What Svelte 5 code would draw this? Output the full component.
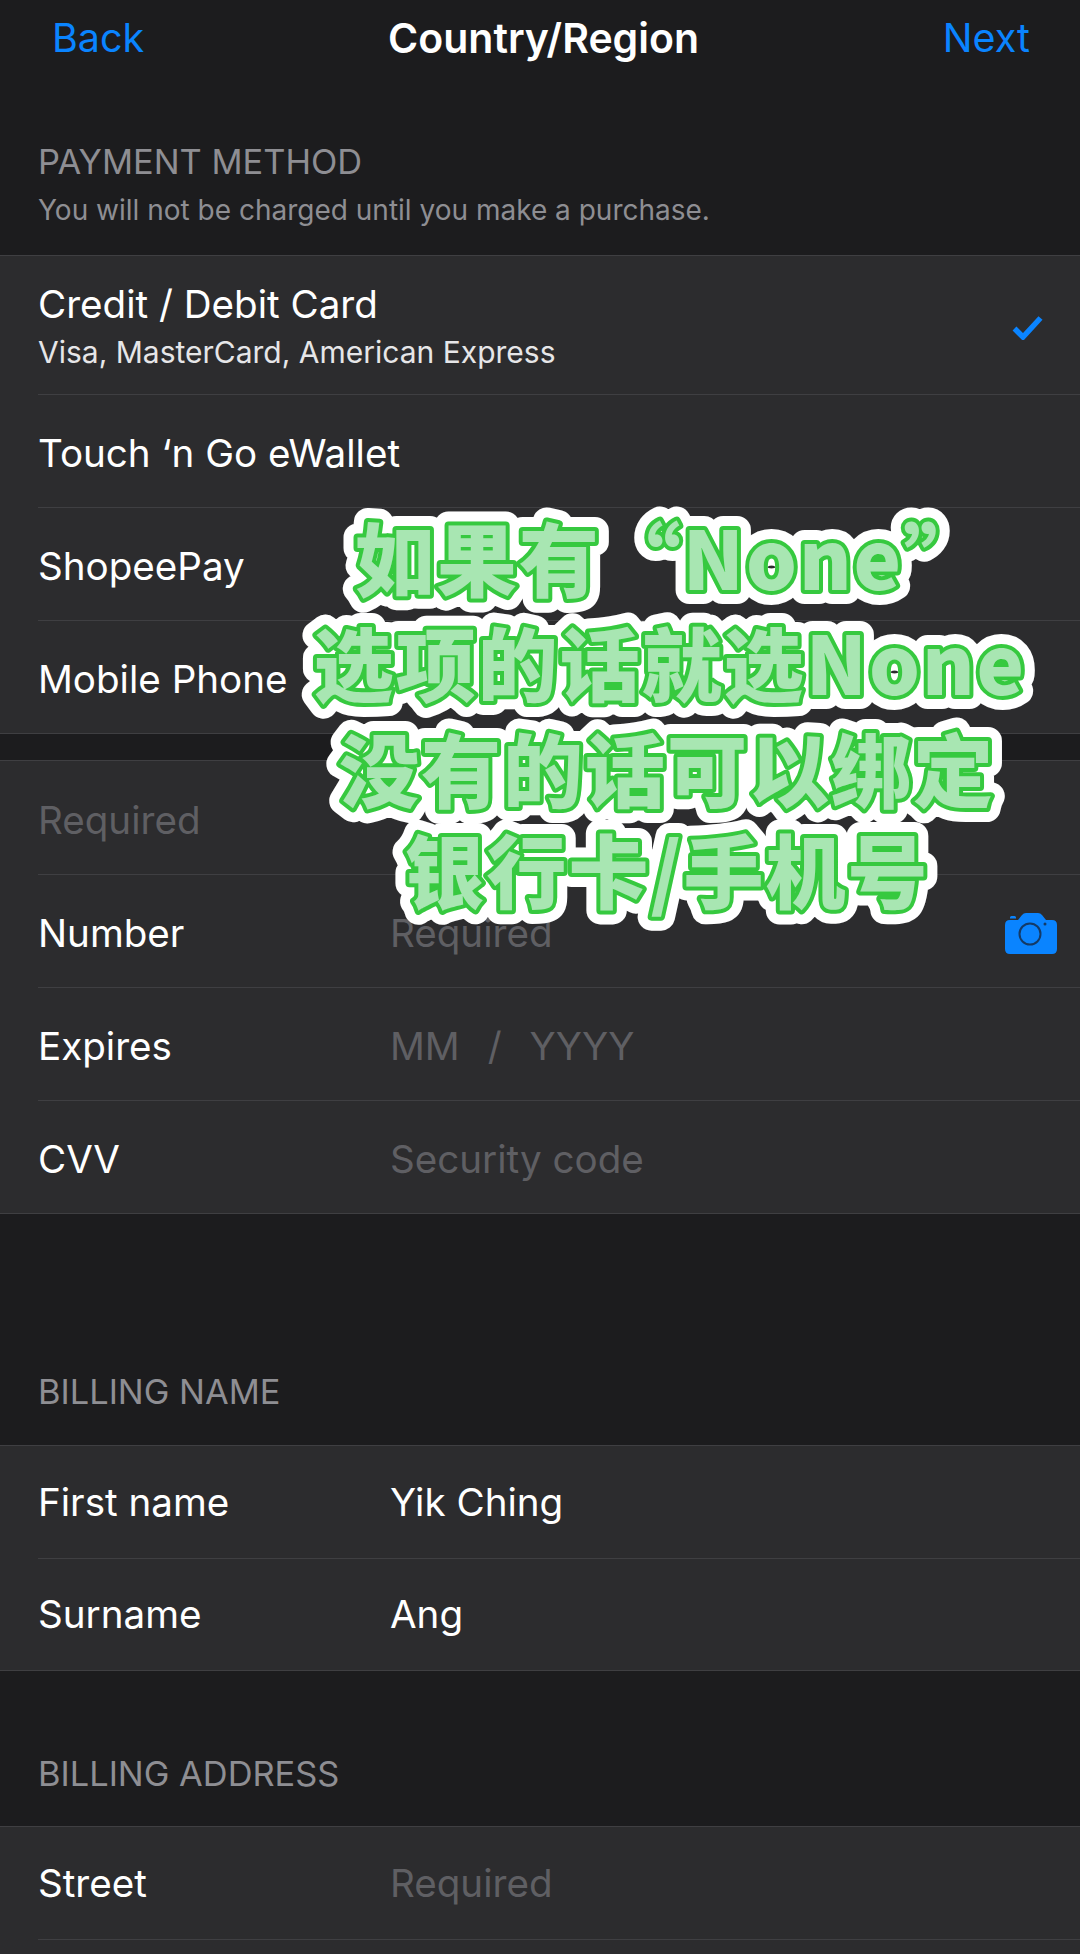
<script>
  const cardRows = [
    { label: 'Number', hint: 'Required', camera: true },
    { label: 'Expires', hint: 'MM', hint2: 'YYYY' },
    { label: 'CVV', hint: 'Security code' }
  ]
  const nameRows = [
    { label: 'First name', value: 'Yik Ching' },
    { label: 'Surname', value: 'Ang' }
  ]
  // x is the centre of each caption line, y its baseline
  const captions = [
    { text: '如果有“None”', x: 670, y: 114 },
    { text: '选项的话就选None', x: 670, y: 219 },
    { text: '没有的话可以绑定', x: 667, y: 325 },
    { text: '银行卡/手机号', x: 667, y: 426 }
  ]
</script>

<div class="page">
  <nav class="nav">
    <span class="link">Back</span>
    <span class="title">Country/Region</span>
    <span class="link">Next</span>
  </nav>

  <div class="head first">
    <div class="head-label">PAYMENT METHOD</div>
    <div class="head-sub">You will not be charged until you make a purchase.</div>
  </div>

  <section class="group">
    <div class="row tall">
      <div class="stack">
        <div class="label">Credit / Debit Card</div>
        <div class="sub">Visa, MasterCard, American Express</div>
      </div>
      <svg class="check" viewBox="0 0 31 25" width="31" height="25">
        <path d="M2.5 13.5 L11 22 L28.5 3" fill="none" stroke="#0a84ff" stroke-width="5.5" />
      </svg>
    </div>
    <div class="row"><span class="label">Touch ‘n Go eWallet</span></div>
    <div class="row"><span class="label">ShopeePay</span></div>
    <div class="row"><span class="label">Mobile Phone</span></div>
  </section>

  <section class="group second">
    <div class="row"><span class="label hint">Required</span></div>
    {#each cardRows as r}
      <div class="row">
        <span class="label key">{r.label}</span>
        <span class="label hint">{r.hint}</span>
        {#if r.hint2}
          <span class="label hint slash">/</span>
          <span class="label hint">{r.hint2}</span>
        {/if}
        {#if r.camera}
          <svg class="camera" viewBox="0 0 52 42" width="52" height="42">
            <path d="M5 8 h8 l4 -5 q1.500 -2 4 -2 h12 q2.500 0 4 2 l4 5 h6 q5 0 5 5 v24 q0 5 -5 5 h-42 q-5 0 -5 -5 v-24 q0 -5 5 -5z M5 5.500 q0 -1.500 1.500 -1.500 h3 q1.500 0 1.500 1.500 v1 h-6z" fill="#0a84ff" />
            <circle cx="25" cy="22" r="10.500" fill="none" stroke="#143a66" stroke-width="2" />
            <circle cx="40" cy="12" r="1.500" fill="#143a66" />
          </svg>
        {/if}
      </div>
    {/each}
  </section>

  <div class="head billing">
    <div class="head-label">BILLING NAME</div>
  </div>
  <section class="group flat">
    {#each nameRows as r}
      <div class="row">
        <span class="label key">{r.label}</span>
        <span class="label">{r.value}</span>
      </div>
    {/each}
  </section>

  <div class="head address">
    <div class="head-label">BILLING ADDRESS</div>
  </div>
  <section class="group flat">
    <div class="row">
      <span class="label key">Street</span>
      <span class="label hint">Required</span>
    </div>
    <div class="row"></div>
  </section>

  <svg class="caption" viewBox="0 0 1080 460" width="1080" height="460">
    {#each captions as line, i}
      <g class="halo"><use href="#caption-{i}" /></g>
      <g class="ink"><text id="caption-{i}" x={line.x} y={line.y} text-anchor="middle">{line.text}</text></g>
    {/each}
  </svg>
</div>

<style>
  :global(body) {
    background: #1c1c1e;
  }
  .page {
    position: relative;
    width: 1080px;
    height: 1954px;
    overflow: hidden;
    background: #1c1c1e;
    color: #fff;
    font-family: Inter, "Noto Sans CJK SC", sans-serif;
  }
  .nav {
    height: 76px;
    padding: 0 50px 0 52px;
    display: flex;
    align-items: center;
    justify-content: space-between;
    font-size: 39.5px;
  }
  .link {
    color: #0a84ff;
  }
  .title {
    font-size: 41px;
    font-weight: 600;
    color: #fff;
  }
  .head {
    box-sizing: border-box;
    padding: 0 38px;
    display: flex;
    flex-direction: column;
  }
  .first {
    height: 179px;
    padding-top: 66px;
  }
  .billing {
    height: 231px;
    padding-top: 158px;
  }
  .address {
    height: 155px;
    padding-top: 83px;
  }
  .head-label {
    font-size: 34.4px;
    line-height: 40px;
    color: #8e8e93;
  }
  .head-sub {
    font-size: 28px;
    line-height: 32px;
    margin-top: 12px;
    color: #8e8e93;
  }
  .group {
    background: #2c2c2e;
    border-top: 1px solid #3f3f42;
    border-bottom: 1px solid #3f3f42;
  }
  .second {
    margin-top: 26px;
  }
  .row {
    position: relative;
    box-sizing: border-box;
    height: 113px;
    padding: 4px 38px 0;
    display: flex;
    align-items: center;
  }
  .flat .row {
    height: 112px;
    padding-top: 0;
  }
  .row + .row::before {
    content: '';
    position: absolute;
    left: 38px;
    right: 0;
    top: 0;
    border-top: 1px solid #3f3f42;
  }
  .tall {
    height: 138px;
    padding-top: 0;
    justify-content: space-between;
  }
  .stack {
    display: flex;
    flex-direction: column;
    gap: 8px;
  }
  .label {
    font-size: 38.6px;
    line-height: 46px;
  }
  .key {
    width: 352px;
    flex: none;
  }
  .hint {
    color: #5f5f63;
  }
  .slash {
    margin: 0 28px;
  }
  .sub {
    font-size: 30px;
    line-height: 34px;
    color: #e6e6e8;
  }
  .check {
    margin-right: -1px;
    margin-top: 4px;
  }
  .camera {
    margin-left: auto;
    margin-right: -15px;
  }
  .caption {
    position: absolute;
    left: 0;
    top: 476px;
    font-family: "Noto Sans CJK SC", sans-serif;
    font-size: 80px;
    font-weight: 900;
    letter-spacing: 2px;
    stroke-linejoin: round;
    paint-order: stroke fill;
  }
  .halo {
    fill: #fff;
    stroke: #fff;
    stroke-width: 28px;
  }
  .ink {
    fill: #a8e6b2;
    stroke: #36c93f;
    stroke-width: 8px;
  }
</style>
